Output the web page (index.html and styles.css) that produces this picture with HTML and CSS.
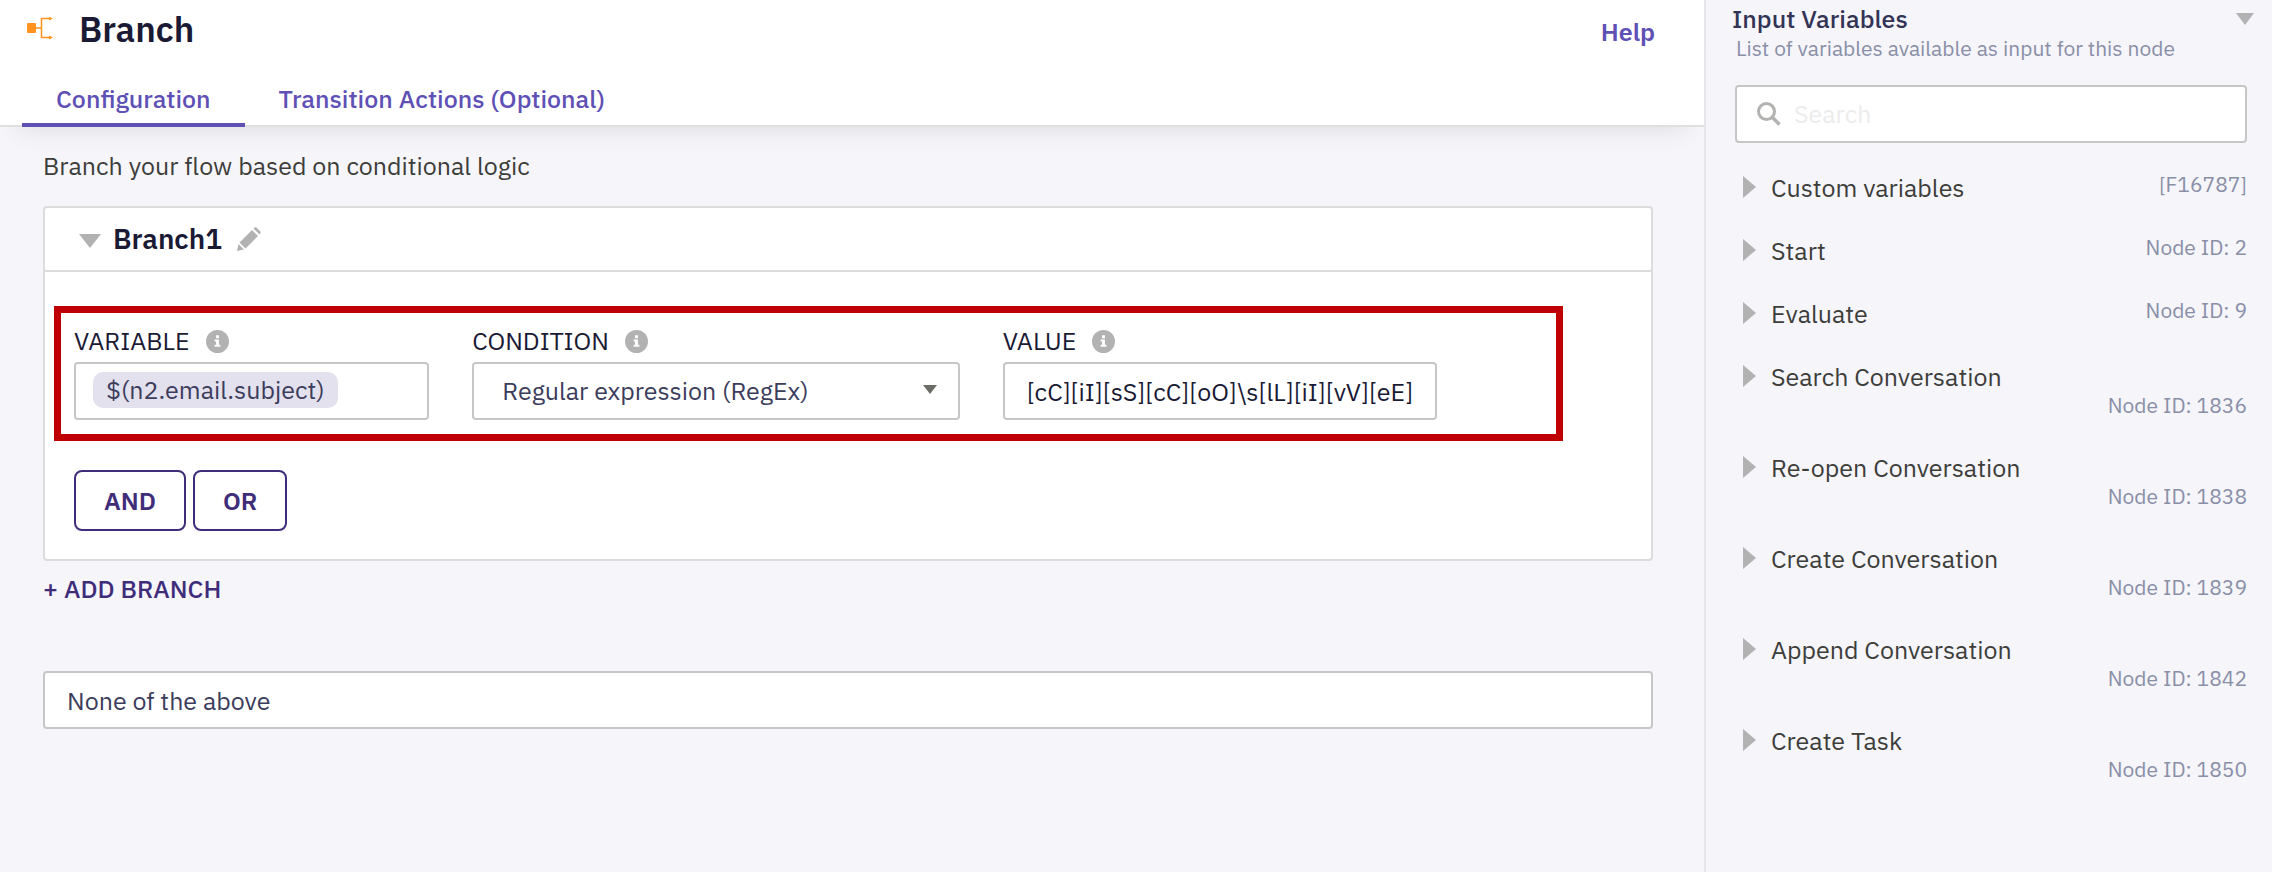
FILE: index.html
```html
<!DOCTYPE html>
<html lang="en">
<head>
<meta charset="utf-8">
<title>Branch</title>
<link rel="stylesheet" href="styles.css">
</head>
<body>
<svg class="defs" width="0" height="0" aria-hidden="true">
  <symbol id="info" viewBox="0 0 24 24"><circle cx="12" cy="12" r="12" fill="#b2b2b2"/><path d="M10.500 5.500h3v3h-3zM9 10h4.500v5.500H15v2H9v-2h1.500V12H9z" fill="#fff"/></symbol>
  <symbol id="right" viewBox="0 0 13 22"><path d="M0 0L13 11L0 22z" fill="#b2b2b2"/></symbol>
  <symbol id="down" viewBox="0 0 22 14"><path d="M0 0H22L11 14z" fill="#b2b2b2"/></symbol>
</svg>
<div class="app">
  <main class="main">
    <header class="header">
      <div class="title-row">
        <svg class="branch-icon" viewBox="0 0 26 24" aria-hidden="true"><rect x="0" y="6" width="9" height="10" rx="1" fill="#ff931e"/><path d="M9 11H14M24 1.500H14.500V20.500H24" fill="none" stroke="#ff931e" stroke-width="1.500"/><path d="M22 0L26 1.500L22 3.500zM22 18.500L26 20.500L22 22.500z" fill="#ff931e"/></svg>
        <h1 class="title">Branch</h1>
        <a class="help" href="#">Help</a>
      </div>
      <nav class="tabs">
        <a class="tab tab-active" href="#">Configuration</a>
        <a class="tab" href="#">Transition Actions (Optional)</a>
      </nav>
    </header>
    <div class="content">
      <p class="intro">Branch your flow based on conditional logic</p>
      <section class="card">
        <div class="card-head">
          <svg class="caret" aria-hidden="true"><use href="#down"/></svg>
          <h2 class="card-title">Branch1</h2>
          <button class="edit" aria-label="Rename branch"><svg class="pencil" viewBox="0 0 24 24" aria-hidden="true"><path d="M0 24L1.500 17L7 22.500zM2.500 15.500L15 3L21 9L8.500 21.500zM16.500 1.500Q18-0.500 20 1L23 4Q24.500 6 22.500 7.500z" fill="#b2b2b2"/></svg></button>
        </div>
        <div class="card-body">
          <div class="rule">
            <div class="field field-variable">
              <div class="label-row"><span class="label" id="variable">VARIABLE</span><svg class="info" aria-hidden="true"><use href="#info"/></svg></div>
              <div class="box tokens" role="textbox" tabindex="0" aria-labelledby="variable"><span class="chip">$(n2.email.subject)</span></div>
            </div>
            <div class="field field-condition">
              <div class="label-row"><label class="label" for="condition">CONDITION</label><svg class="info" aria-hidden="true"><use href="#info"/></svg></div>
              <div class="select-wrap">
                <select class="box select" id="condition"><option>Regular expression (RegEx)</option></select>
                <svg class="select-arrow" viewBox="0 0 14 9" aria-hidden="true"><path d="M0 0H14L7 9z" fill="#6b6b68"/></svg>
              </div>
            </div>
            <div class="field field-value">
              <div class="label-row"><label class="label" for="value">VALUE</label><svg class="info" aria-hidden="true"><use href="#info"/></svg></div>
              <input class="box value" id="value" type="text" value="[cC][iI][sS][cC][oO]\s[lL][iI][vV][eE]">
            </div>
          </div>
          <div class="buttons">
            <button class="btn">AND</button>
            <button class="btn">OR</button>
          </div>
        </div>
      </section>
      <button class="add">+ ADD BRANCH</button>
      <input class="box fallback" type="text" value="None of the above" aria-label="Fallback branch">
    </div>
  </main>
  <aside class="side">
    <div class="side-head">
      <h2 class="side-title">Input Variables</h2>
      <svg class="side-caret" viewBox="0 0 18 12" aria-hidden="true"><path d="M0 0H18L9 12z" fill="#b2b2b2"/></svg>
    </div>
    <p class="side-sub">List of variables available as input for this node</p>
    <label class="search">
      <svg class="search-icon" viewBox="0 0 24 24" aria-hidden="true"><circle cx="9.500" cy="9.500" r="8" fill="none" stroke="#b2b2b0" stroke-width="3"/><path d="M15 15L22.500 22.500" stroke="#b2b2b0" stroke-width="3.500"/></svg>
      <input class="search-input" type="search" placeholder="Search" aria-label="Search">
    </label>
    <ul class="list">
      <li class="item"><svg class="tri" aria-hidden="true"><use href="#right"/></svg><span class="name">Custom variables</span><span class="id">[F16787]</span></li>
      <li class="item"><svg class="tri" aria-hidden="true"><use href="#right"/></svg><span class="name">Start</span><span class="id">Node ID: 2</span></li>
      <li class="item"><svg class="tri" aria-hidden="true"><use href="#right"/></svg><span class="name">Evaluate</span><span class="id">Node ID: 9</span></li>
      <li class="item item-tall"><svg class="tri" aria-hidden="true"><use href="#right"/></svg><span class="name">Search Conversation</span><span class="id">Node ID: 1836</span></li>
      <li class="item item-tall"><svg class="tri" aria-hidden="true"><use href="#right"/></svg><span class="name">Re-open Conversation</span><span class="id">Node ID: 1838</span></li>
      <li class="item item-tall"><svg class="tri" aria-hidden="true"><use href="#right"/></svg><span class="name">Create Conversation</span><span class="id">Node ID: 1839</span></li>
      <li class="item item-tall"><svg class="tri" aria-hidden="true"><use href="#right"/></svg><span class="name">Append Conversation</span><span class="id">Node ID: 1842</span></li>
      <li class="item item-tall"><svg class="tri" aria-hidden="true"><use href="#right"/></svg><span class="name">Create Task</span><span class="id">Node ID: 1850</span></li>
    </ul>
  </aside>
</div>
</body>
</html>
```
FILE: styles.css
```css
* { box-sizing: border-box; }
body {
  margin: 0;
  background: #f5f5fa;
  color: #3d3d3a;
  font: 400 25px/36px "IBM Plex Sans", Roboto, "Noto Sans", sans-serif;
}
h1, h2, p, ul { margin: 0; padding: 0; }
button, input, select { font: inherit; color: inherit; }
a { text-decoration: none; }
.defs { position: absolute; }
.app { display: flex; min-height: 100vh; }
.main { flex: 3 1 0; min-width: 0; }

.header {
  display: flex;
  flex-direction: column;
  background: #fff;
  border-bottom: 2px solid #e0e0e0;
  box-shadow: 0 20px 24px -18px rgba(0, 0, 0, 0.1);
}
.title-row { display: flex; align-items: center; height: 58px; padding: 0 49px 0 27px; }
.branch-icon { width: 26px; height: 24px; }
.title { margin-left: 26px; font-size: 35px; font-weight: 600; line-height: 40px; color: #1a1a35; }
.help { margin-left: auto; padding-top: 6px; font-weight: 600; color: #5e50b5; }
.tabs { display: flex; padding: 17px 22px 0; margin-bottom: -2px; }
.tab { padding: 6px 34px; border-bottom: 4px solid transparent; font-weight: 500; color: #5e50b5; }
.tab-active { border-color: #5e50b5; }

.content { display: flex; flex-direction: column; align-items: flex-start; padding: 21px 51px 0 43px; }
.card { align-self: stretch; margin-top: 22px; background: #fff; border: 2px solid #dcdcdc; border-radius: 4px; }
.card-head { display: flex; align-items: center; height: 64px; padding-left: 34px; border-bottom: 2px solid #dcdcdc; }
.caret { width: 22px; height: 14px; margin-top: 4px; }
.card-title { margin-left: 12px; font-size: 28px; font-weight: 600; color: #1a1a35; }
.edit { display: flex; margin-left: 15px; padding: 0; border: 0; background: none; }
.pencil { width: 24px; height: 24px; }
.card-body { padding: 34px 88px 28px 9px; }
.rule { display: flex; gap: 43px; padding: 10px 119px 14px 13px; border: 7px solid #c00000; }
.label-row { display: flex; align-items: center; gap: 16px; height: 36px; margin-bottom: 3px; color: #1a1a35; }
.info { width: 23px; height: 23px; }
.field { min-width: 0; }
.field-variable { flex: 355 1 0; }
.field-condition { flex: 487 1 0; }
.field-value { flex: 434 1 0; }
.box { display: block; width: 100%; height: 58px; background: #fff; border: 2px solid #c6c6c6; border-radius: 4px; color: #3c3c5c; }
.tokens { padding: 8px 17px; }
.chip { display: inline-block; padding: 0 13px; background: #e3e1ee; border-radius: 10px; }
.select-wrap { position: relative; }
.select { appearance: none; padding: 0 60px 0 28px; }
.select-arrow { position: absolute; right: 23px; top: 23px; width: 14px; height: 9px; pointer-events: none; }
.value { padding: 0 20px 0 22px; color: #1a1a35; }
.buttons { display: flex; gap: 7px; margin: 29px 0 0 20px; }
.btn { height: 61px; padding: 0 28px; background: #fff; border: 2px solid #402d7a; border-radius: 8px; font-weight: 600; color: #402d7a; }
.add { margin-top: 10px; padding: 0; border: 0; background: none; font-weight: 500; color: #402d7a; }
.fallback { margin-top: 64px; padding: 0 22px; }

.side { flex: none; width: 25%; padding: 3px 25px 0 28px; border-left: 2px solid #e6e6ea; }
.side-head { display: flex; align-items: center; justify-content: space-between; height: 32px; margin-right: -7px; }
.side-title { margin-left: -2px; font-size: 25px; font-weight: 500; color: #333355; }
.side-caret { width: 18px; height: 12px; }
.side-sub { padding-left: 2px; font-size: 21px; line-height: 26px; color: #8a8fa8; }
.search { display: flex; align-items: center; height: 58px; margin: 24px 0 0 1px; padding-left: 20px; background: #fff; border: 2px solid #c6c6c6; border-radius: 4px; }
.search-icon { width: 24px; height: 24px; }
.search-input { flex: 1; min-width: 0; padding: 0 13px; border: 0; background: none; }
.search-input::placeholder { color: #ececec; opacity: 1; }
.list { margin-top: 27px; list-style: none; }
.item { display: grid; grid-template-columns: 13px 1fr auto; column-gap: 15px; padding: 0 0 28px 9px; line-height: 35px; }
.tri { width: 13px; height: 22px; margin-top: 6px; }
.id { font-size: 21px; line-height: 28px; color: #8a8fa8; }
.item-tall { padding-bottom: 34px; }
.item-tall .id { grid-column: 1 / -1; justify-self: end; line-height: 22px; }
```
